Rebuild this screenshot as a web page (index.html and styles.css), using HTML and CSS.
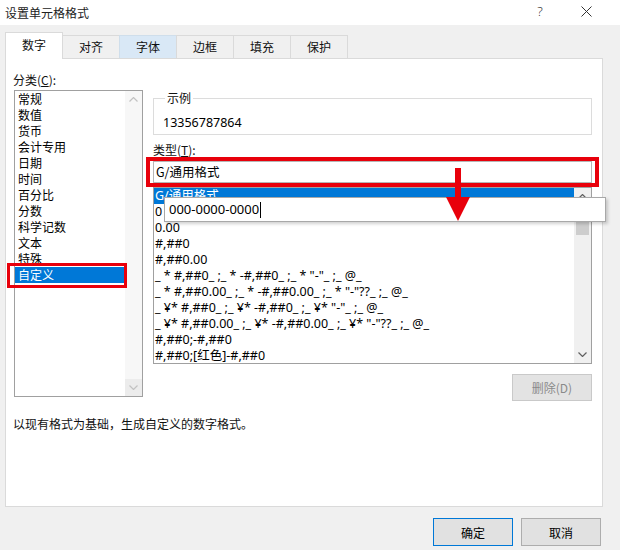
FILE: index.html
```html
<!DOCTYPE html>
<html lang="zh-CN">
<head>
<meta charset="utf-8">
<title>设置单元格格式</title>
<link rel="stylesheet" href="styles.css">
</head>
<body>
<div class="dialog">
  <header class="titlebar">
    <span class="title">设置单元格格式</span>
    <div class="title-btns">
      <span class="tbtn help">?</span>
      <span class="tbtn"><svg class="close" width="11" height="11" viewBox="0 0 11 11"><path d="M0.5 0.5 L10.5 10.5 M10.5 0.5 L0.5 10.5"/></svg></span>
    </div>
  </header>
  <nav class="tabs">
    <div class="tab active">数字</div>
    <div class="tab">对齐</div>
    <div class="tab hover">字体</div>
    <div class="tab">边框</div>
    <div class="tab">填充</div>
    <div class="tab">保护</div>
  </nav>
  <section class="panel">
    <div class="cols">
      <div class="col-left">
        <div class="label">分类(<u>C</u>):</div>
        <div class="listbox cat">
          <ul class="items">
            <li>常规</li>
            <li>数值</li>
            <li>货币</li>
            <li>会计专用</li>
            <li>日期</li>
            <li>时间</li>
            <li>百分比</li>
            <li>分数</li>
            <li>科学记数</li>
            <li>文本</li>
            <li>特殊</li>
            <li class="sel">自定义</li>
          </ul>
          <div class="vscroll light">
            <span class="sarrow"><svg width="9" height="5" viewBox="0 0 9 5"><path d="M0.5 4.5 L4.5 0.5 L8.5 4.5"/></svg></span>
            <span class="track"></span>
            <span class="sarrow bottom"><svg width="9" height="5" viewBox="0 0 9 5"><path d="M0.5 0.5 L4.5 4.5 L8.5 0.5"/></svg></span>
          </div>
        </div>
      </div>
      <div class="col-right">
        <fieldset class="sample">
          <legend>示例</legend>
          <div class="sample-val">13356787864</div>
        </fieldset>
        <div class="label type-label">类型(<u>T</u>):</div>
        <div class="hl-input"><div class="input">G/通用格式</div></div>
        <div class="listbox fmt">
          <ul class="items">
            <li class="sel">G/通用格式</li>
            <li>0</li>
            <li>0.00</li>
            <li>#,##0</li>
            <li>#,##0.00</li>
            <li>_ * #,##0_ ;_ * -#,##0_ ;_ * "-"_ ;_ @_</li>
            <li>_ * #,##0.00_ ;_ * -#,##0.00_ ;_ * "-"??_ ;_ @_</li>
            <li>_ ¥* #,##0_ ;_ ¥* -#,##0_ ;_ ¥* "-"_ ;_ @_</li>
            <li>_ ¥* #,##0.00_ ;_ ¥* -#,##0.00_ ;_ ¥* "-"??_ ;_ @_</li>
            <li>#,##0;-#,##0</li>
            <li>#,##0;[红色]-#,##0</li>
          </ul>
          <div class="vscroll">
            <span class="sarrow"><svg width="9" height="5" viewBox="0 0 9 5"><path d="M0.5 4.5 L4.5 0.5 L8.5 4.5"/></svg></span>
            <span class="thumb"></span>
            <span class="track"></span>
            <span class="sarrow bottom"><svg width="9" height="5" viewBox="0 0 9 5"><path d="M0.5 0.5 L4.5 4.5 L8.5 0.5"/></svg></span>
          </div>
        </div>
        <div class="btn-row"><button class="btn disabled">删除(D)</button></div>
      </div>
    </div>
    <p class="desc">以现有格式为基础，生成自定义的数字格式。</p>
    <div class="hl-cat"></div>
    <div class="popup">000-0000-0000<span class="caret"></span></div>
    <svg class="red-arrow" width="26" height="54" viewBox="0 0 26 54"><rect x="10" y="0" width="6" height="31"/><polygon points="1,29 25,29 13,53"/></svg>
  </section>
  <footer class="actions">
    <button class="btn default">确定</button>
    <button class="btn">取消</button>
  </footer>
</div>
</body>
</html>
```
FILE: styles.css
```css
html, body {
  margin: 0;
  padding: 0;
}
body {
  width: 620px;
  height: 550px;
  background: #f0f0f0;
  font-family: "Noto Sans CJK SC", "Noto Sans", sans-serif;
  font-size: 12px;
  color: #000;
  overflow: hidden;
}
.dialog {
  width: 620px;
  height: 550px;
}
.titlebar {
  height: 25px;
  background: #fff;
  display: flex;
  justify-content: space-between;
  align-items: center;
  padding-left: 5px;
}
.title {
  font-size: 12px;
  line-height: 16px;
  color: #222;
}
.title-btns {
  display: flex;
  height: 25px;
  padding-right: 11px;
}
.tbtn {
  width: 46px;
  height: 22px;
  display: flex;
  align-items: center;
  justify-content: center;
}
.help {
  font-family: "Noto Sans", sans-serif;
  font-size: 13px;
  font-weight: 300;
  color: #333;
}
.close path {
  stroke: #333;
  stroke-width: 1;
  fill: none;
}
.tabs {
  display: flex;
  align-items: flex-end;
  margin: 7px 0 0 5px;
  height: 26px;
  position: relative;
  z-index: 1;
}
.tab {
  width: 58px;
  height: 23px;
  box-sizing: border-box;
  border: 1px solid #dadada;
  border-bottom: none;
  margin-left: -1px;
  background: #f0f0f0;
  text-align: center;
  line-height: 22px;
  color: #111;
}
.tab.active {
  margin-left: 0;
  height: 27px;
  margin-bottom: -1px;
  background: #fff;
  line-height: 24px;
}
.tab.hover {
  background: #d9e8f6;
  border-color: #cfdeeb;
}
.panel {
  position: relative;
  margin-left: 5px;
  width: 598px;
  height: 449px;
  box-sizing: border-box;
  border: 1px solid #dadada;
  background: #fff;
  padding: 13px 10px 0 7px;
}
.cols {
  display: flex;
  gap: 10px;
}
.col-left {
  width: 130px;
}
.col-right {
  width: 439px;
}
.label {
  line-height: 16px;
  color: #111;
}
.col-left .label {
  margin-bottom: 2px;
}
.listbox {
  display: flex;
  box-sizing: border-box;
  border: 1px solid #a0a0a0;
  background: #fff;
  overflow: hidden;
}
.listbox.cat {
  margin-left: 1px;
  width: 129px;
  height: 307px;
}
.listbox.fmt {
  width: 439px;
  height: 177px;
}
.items {
  list-style: none;
  margin: 0;
  padding: 0;
  flex: 1;
  overflow: hidden;
}
.items li {
  height: 16px;
  line-height: 16px;
  padding-left: 3px;
  white-space: nowrap;
}
.fmt .items li {
  padding-left: 1px;
  font-family: "Noto Sans", "Noto Sans CJK SC", sans-serif;
  font-size: 12.5px;
}
.items li.sel {
  background: #0078d7;
  color: #fff;
}
.vscroll {
  width: 17px;
  display: flex;
  flex-direction: column;
  background: #f0f0f0;
}
.vscroll.light {
  background: #f7f7f7;
}
.sarrow {
  height: 17px;
  display: flex;
  align-items: center;
  justify-content: center;
}
.sarrow path {
  fill: none;
  stroke: #606060;
  stroke-width: 1.2;
}
.vscroll.light .sarrow path {
  stroke: #c2c2c2;
}
.vscroll.light .sarrow.bottom {
  background: #ececec;
}
.thumb {
  height: 30px;
  margin: 0 2px;
  background: #cdcdcd;
}
.track {
  flex: 1;
}
.sample {
  margin: 18px 0 0 0;
  padding: 0 0 3px 9px;
  border: 1px solid #dcdcdc;
}
.sample legend {
  padding: 0 2px;
  margin-left: 2px;
  line-height: 16px;
  color: #111;
}
.sample-val {
  margin-top: 9px;
  line-height: 16px;
  font-family: "Noto Sans", sans-serif;
  font-size: 12.5px;
}
.type-label {
  margin-top: 8px;
  line-height: 14px;
}
.hl-input {
  margin: 0 -7px;
  border: 4px solid #e8000b;
  padding: 0 3px;
  background: #fff;
  position: relative;
  z-index: 1;
}
.input {
  height: 22px;
  box-sizing: border-box;
  border: 1px solid #b6b6b6;
  line-height: 20px;
  padding-left: 2px;
  font-size: 12.5px;
}
.btn-row {
  display: flex;
  justify-content: flex-end;
  margin-top: 10px;
}
.btn {
  width: 80px;
  height: 28px;
  box-sizing: border-box;
  border: 1px solid #adadad;
  background: #e1e1e1;
  font-family: "Noto Sans CJK SC", "Noto Sans", sans-serif;
  font-size: 12px;
  color: #000;
  padding: 0;
}
.btn.disabled {
  height: 27px;
  background: #e3e3e3;
  border-color: #c9c9c9;
  color: #8a8a8a;
}
.btn.default {
  border-color: #0078d7;
}
.desc {
  margin: 15px 0 0 0;
  line-height: 16px;
  color: #111;
}
.hl-cat {
  position: absolute;
  left: 1px;
  top: 204px;
  width: 120px;
  height: 25px;
  box-sizing: border-box;
  border: 3px solid #e8000b;
}
.popup {
  position: absolute;
  left: 158px;
  top: 138px;
  width: 442px;
  height: 25px;
  box-sizing: border-box;
  border: 1px solid #a8a8a8;
  background: #fff;
  box-shadow: 2px 2px 3px rgba(0, 0, 0, 0.18);
  padding-left: 4px;
  font-family: "Noto Sans", sans-serif;
  font-size: 13px;
  line-height: 23px;
  display: flex;
  align-items: center;
  z-index: 2;
}
.caret {
  display: inline-block;
  width: 0;
  height: 16px;
  border-left: 1px solid #000;
  margin-left: 1px;
}
.red-arrow {
  position: absolute;
  left: 439px;
  top: 109px;
  z-index: 3;
}
.red-arrow rect, .red-arrow polygon {
  fill: #e8000b;
}
.actions {
  display: flex;
  justify-content: flex-end;
  gap: 8px;
  padding-right: 19px;
  margin-top: 11px;
}
```
